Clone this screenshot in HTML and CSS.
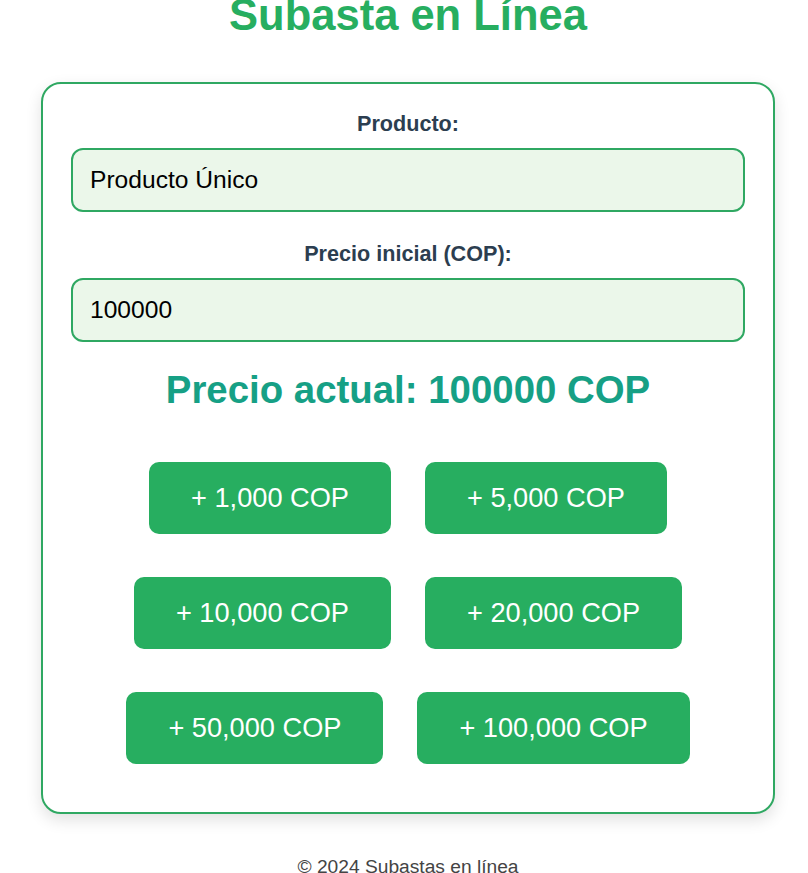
FILE: index.html
```html
<!DOCTYPE html>
<html lang="es">
<head>
<meta charset="utf-8">
<title>Subasta en Línea</title>
<link rel="stylesheet" href="styles.css">
</head>
<body>
<h1 class="title">Subasta en Línea</h1>
<main class="card">
  <label class="label" for="producto">Producto:</label>
  <input class="field" id="producto" type="text" value="Producto Único">
  <label class="label label-gap" for="precio">Precio inicial (COP):</label>
  <input class="field" id="precio" type="text" value="100000">
  <h2 class="current">Precio actual: 100000 COP</h2>
  <div class="bids">
    <button class="bid">+ 1,000 COP</button>
    <button class="bid">+ 5,000 COP</button>
    <button class="bid">+ 10,000 COP</button>
    <button class="bid">+ 20,000 COP</button>
    <button class="bid">+ 50,000 COP</button>
    <button class="bid">+ 100,000 COP</button>
  </div>
</main>
<footer class="footer">© 2024 Subastas en línea</footer>
</body>
</html>
```
FILE: styles.css
```css
* { box-sizing: border-box; }
html, body { background: #ffffff; }
body {
  margin: 0 0 0 8px;
  width: 800px;
  font-family: "Liberation Sans", Arial, sans-serif;
}
.title {
  margin: -10px 0 0;
  font-size: 43.5px;
  line-height: 50px;
  color: #27ae60;
  text-align: center;
  font-weight: bold;
}
.card {
  width: 734px;
  margin: 42px auto 0;
  border: 2px solid #2fa862;
  border-radius: 20px;
  padding: 27px 28px 48px;
  background: #ffffff;
  box-shadow: 0 6px 16px rgba(0, 0, 0, 0.12);
}
.label {
  display: block;
  text-align: center;
  font-weight: bold;
  font-size: 21.6px;
  line-height: 25px;
  color: #2c3e50;
  margin-bottom: 12px;
}
.label-gap { margin-top: 29px; }
.field {
  display: block;
  width: 100%;
  height: 64px;
  border: 2px solid #2fa862;
  border-radius: 12px;
  background: #ebf7ea;
  padding: 0 17px;
  font-family: "Liberation Sans", Arial, sans-serif;
  font-size: 24.6px;
  color: #000;
  outline: none;
}
.current {
  margin: 26px 0 0;
  text-align: center;
  font-size: 38.4px;
  line-height: 44px;
  font-weight: bold;
  color: #16a085;
}
.bids {
  margin-top: 50px;
  display: flex;
  flex-wrap: wrap;
  justify-content: center;
  column-gap: 34px;
  row-gap: 43px;
}
.bid {
  height: 72px;
  padding: 0 42px;
  border: none;
  border-radius: 10px;
  background: #27ae60;
  color: #ffffff;
  font-family: "Liberation Sans", Arial, sans-serif;
  font-size: 27.2px;
  cursor: pointer;
}
.footer {
  margin-top: 42px;
  text-align: center;
  font-size: 19.2px;
  line-height: 22px;
  color: #444;
}
```
